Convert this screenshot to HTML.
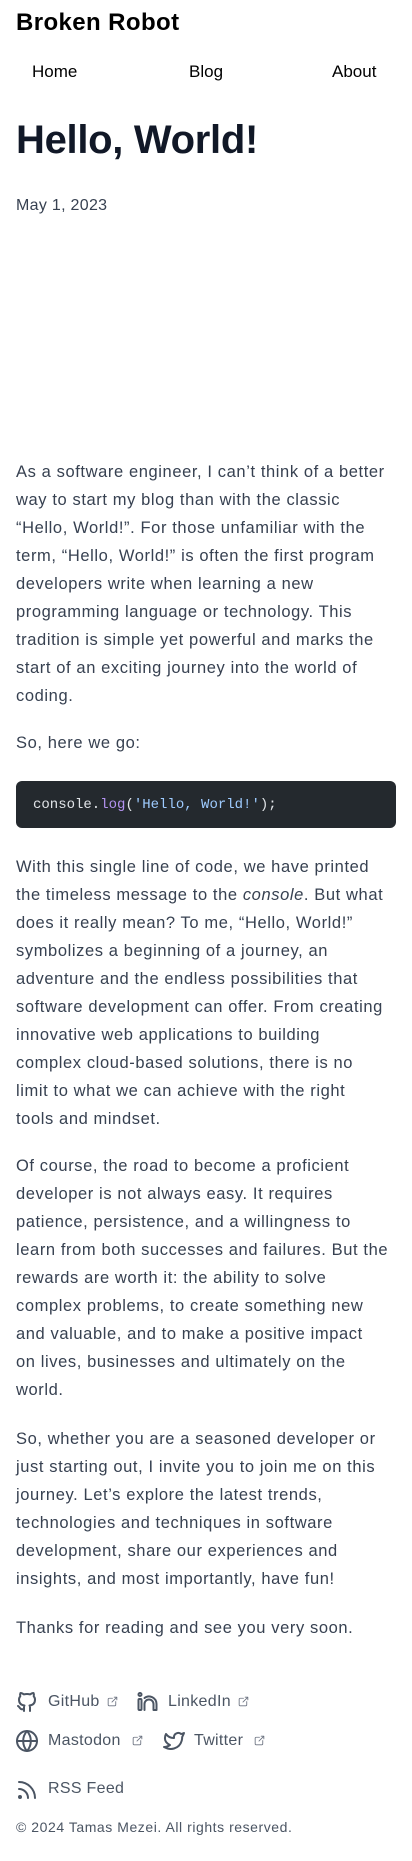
<!DOCTYPE html>
<html><head><meta charset="utf-8"><style>
*{margin:0;padding:0;box-sizing:border-box}
body{width:412px;height:1861px;background:#fff;position:relative;font-family:"Liberation Sans",sans-serif;color:#374151;overflow:hidden}
.a{position:absolute;white-space:nowrap}
.p{position:absolute;left:16px;font-size:16.5px;letter-spacing:0.6px;line-height:28px;white-space:nowrap;color:#374151}
.ic{position:absolute;fill:none;stroke:#4b5563;stroke-width:2;stroke-linecap:round;stroke-linejoin:round}
.ft{position:absolute;font-size:16px;letter-spacing:0.3px;color:#4b5563;line-height:20px;white-space:nowrap}
.ex{position:absolute;fill:none;stroke:#6b7280;stroke-width:1.6;stroke-linecap:round;stroke-linejoin:round}
</style></head><body>
<div class="a" style="left:16px;top:8px;font-size:24px;font-weight:bold;color:#000;line-height:30px;letter-spacing:0.4px">Broken Robot</div>
<div class="a" style="left:32px;top:61px;font-size:17px;color:#000;line-height:22px">Home</div>
<div class="a" style="left:189px;top:61px;font-size:17px;color:#000;line-height:22px">Blog</div>
<div class="a" style="left:332px;top:61px;font-size:17px;color:#000;line-height:22px">About</div>
<div class="a" style="left:16px;top:115px;font-size:40px;font-weight:900;color:#111827;line-height:50px;letter-spacing:-0.3px">Hello, World!</div>
<div class="a" style="left:16px;top:196px;font-size:16px;line-height:20px;color:#374151;letter-spacing:0.3px">May 1, 2023</div>

<div class="p" style="top:458px">As a software engineer, I can’t think of a better<br>way to start my blog than with the classic<br>“Hello, World!”. For those unfamiliar with the<br>term, “Hello, World!” is often the first program<br>developers write when learning a new<br>programming language or technology. This<br>tradition is simple yet powerful and marks the<br>start of an exciting journey into the world of<br>coding.</div>
<div class="p" style="top:729px">So, here we go:</div>
<div class="a" style="left:16px;top:781px;width:380px;height:47px;background:#24292e;border-radius:6px"></div>
<div class="a" style="left:33px;top:795px;font-family:'Liberation Mono',monospace;font-size:14px;line-height:20px;color:#e1e4e8">console.<span style="color:#b392f0">log</span>(<span style="color:#9ecbff">'Hello, World!'</span>);</div>

<div class="p" style="top:853px">With this single line of code, we have printed<br>the timeless message to the <i>console</i>. But what<br>does it really mean? To me, “Hello, World!”<br>symbolizes a beginning of a journey, an<br>adventure and the endless possibilities that<br>software development can offer. From creating<br>innovative web applications to building<br>complex cloud-based solutions, there is no<br>limit to what we can achieve with the right<br>tools and mindset.</div>
<div class="p" style="top:1152px">Of course, the road to become a proficient<br>developer is not always easy. It requires<br>patience, persistence, and a willingness to<br>learn from both successes and failures. But the<br>rewards are worth it: the ability to solve<br>complex problems, to create something new<br>and valuable, and to make a positive impact<br>on lives, businesses and ultimately on the<br>world.</div>
<div class="p" style="top:1425px">So, whether you are a seasoned developer or<br>just starting out, I invite you to join me on this<br>journey. Let’s explore the latest trends,<br>technologies and techniques in software<br>development, share our experiences and<br>insights, and most importantly, have fun!</div>
<div class="p" style="top:1614px">Thanks for reading and see you very soon.</div>

<svg class="ic" style="left:15px;top:1690px" width="24" height="24" viewBox="0 0 24 24"><path d="M9 19c-4.3 1.4-4.3-2.5-6-3m12 5v-3.5c0-1 .1-1.4-.5-2 2.8-.3 5.5-1.4 5.5-6a4.6 4.6 0 0 0-1.3-3.2 4.2 4.2 0 0 0-.1-3.2s-1.1-.3-3.5 1.3a12.3 12.3 0 0 0-6.2 0C6.5 2.8 5.4 3.1 5.4 3.1a4.2 4.2 0 0 0-.1 3.2A4.6 4.6 0 0 0 4 9.5c0 4.6 2.7 5.7 5.5 6-.6.6-.6 1.2-.5 2V21"/></svg>
<div class="ft" style="left:48px;top:1692px">GitHub</div>
<svg class="ex" style="left:106px;top:1695px" width="13" height="13" viewBox="0 0 24 24"><path d="M12 6H6a2 2 0 0 0-2 2v10a2 2 0 0 0 2 2h10a2 2 0 0 0 2-2v-6M11 13l9-9M15 4h5v5"/></svg>
<svg class="ic" style="left:136px;top:1690px" width="24" height="24" viewBox="0 0 24 24"><rect x="2.5" y="9" width="3" height="11" rx="1"/><circle cx="4" cy="4.5" r="1.5"/><path d="M8.5 20v-6a4.5 4.5 0 0 1 9 0v6h3v-6a7.5 7.5 0 0 0-12-6"/></svg>
<div class="ft" style="left:168px;top:1692px">LinkedIn</div>
<svg class="ex" style="left:237px;top:1695px" width="13" height="13" viewBox="0 0 24 24"><path d="M12 6H6a2 2 0 0 0-2 2v10a2 2 0 0 0 2 2h10a2 2 0 0 0 2-2v-6M11 13l9-9M15 4h5v5"/></svg>

<svg class="ic" style="left:15px;top:1729px" width="24" height="24" viewBox="0 0 24 24"><circle cx="12" cy="12" r="10"/><path d="M2 12h20M12 2a15 15 0 0 1 0 20M12 2a15 15 0 0 0 0 20"/></svg>
<div class="ft" style="left:48px;top:1731px">Mastodon</div>
<svg class="ex" style="left:131px;top:1734px" width="13" height="13" viewBox="0 0 24 24"><path d="M12 6H6a2 2 0 0 0-2 2v10a2 2 0 0 0 2 2h10a2 2 0 0 0 2-2v-6M11 13l9-9M15 4h5v5"/></svg>
<svg class="ic" style="left:162px;top:1729px" width="24" height="24" viewBox="0 0 24 24"><path d="M22 4.01c-1 .49-1.98.689-3 .99-1.121-1.265-2.783-1.335-4.38-.737S11.977 6.323 12 8v1c-3.245.083-6.135-1.395-8-4 0 0-4.182 7.433 4 11-1.872 1.247-3.739 2.088-6 2 3.308 1.803 6.913 2.423 10.034 1.517 3.58-1.04 6.522-3.723 7.651-7.742a13.84 13.84 0 0 0 .497-3.753C20.18 7.773 21.692 5.25 22 4.009z"/></svg>
<div class="ft" style="left:194px;top:1731px">Twitter</div>
<svg class="ex" style="left:253px;top:1734px" width="13" height="13" viewBox="0 0 24 24"><path d="M12 6H6a2 2 0 0 0-2 2v10a2 2 0 0 0 2 2h10a2 2 0 0 0 2-2v-6M11 13l9-9M15 4h5v5"/></svg>

<svg class="ic" style="left:15px;top:1778px" width="24" height="24" viewBox="0 0 24 24"><circle cx="5" cy="19" r="1" fill="#4b5563"/><path d="M4 4a16 16 0 0 1 16 16M4 11a9 9 0 0 1 9 9"/></svg>
<div class="ft" style="left:48px;top:1779px">RSS Feed</div>
<div class="a" style="left:16px;top:1818px;font-size:14px;line-height:18px;color:#4b5563;letter-spacing:0.55px">© 2024 Tamas Mezei. All rights reserved.</div>
</body></html>
